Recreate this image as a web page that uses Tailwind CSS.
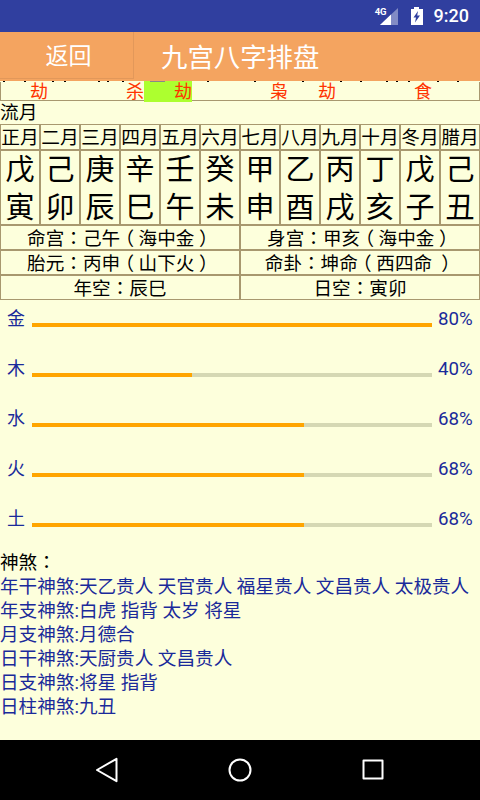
<!DOCTYPE html>
<html lang="zh">
<head>
  <meta charset="UTF-8">
  <title>九宫八字排盘</title>
  <meta name="viewport" content="width=device-width, initial-scale=1.0">
  <script src="https://cdn.jsdelivr.net/npm/@tailwindcss/browser@4"></script>
</head>
<body class="w-[480px] h-[800px] overflow-hidden bg-[#fdffdc] text-black font-['Roboto','Noto_Sans_CJK_SC',sans-serif]">
  <div class="flex flex-col h-[800px]">

    <!-- status bar -->
    <div class="h-8 bg-[#303f9f] flex items-center justify-end text-white shrink-0">
      <span class="text-[9.5px] font-bold leading-none mb-[9px] mr-[-7px]">4G</span>
      <svg width="20" height="18" viewBox="0 0 20 18" class="mt-[1px]">
        <path d="M0 17 L18 0 V17 Z" fill="#fff" fill-opacity="0.4"/>
        <path d="M0 17 L11 6.6 V17 Z" fill="#fff"/>
      </svg>
      <svg width="14" height="18" viewBox="0 0 14 18" class="ml-[10px]">
        <path d="M4 0 H9 V2 H13 V18 H1 V2 H4 Z M8 4 L3.500 10.500 H6 L5 15.500 L10 8.500 H7.200 Z" fill="#fff" fill-rule="evenodd"/>
      </svg>
      <span class="text-[18px] font-medium ml-[10px] mr-[11px] leading-none">9:20</span>
    </div>

    <!-- title bar -->
    <div class="h-[49px] bg-[#f4a460] flex shrink-0 text-white">
      <div class="w-[134px] h-[47px] flex items-center justify-center pl-1 pt-1 text-[23px] border-r border-b border-[#e2985a]">返回</div>
      <div class="pl-[27px] text-[26.4px] leading-[53px]">九宫八字排盘</div>
    </div>

    <!-- strokes of the row hidden behind the title bar -->
    <div class="relative h-[1px] shrink-0">
      <i class="absolute left-[3px] w-[2px] h-[1px] bg-black"></i>
      <i class="absolute left-[24px] w-[2px] h-[1px] bg-black"></i>
      <i class="absolute left-[52px] w-[2px] h-[1px] bg-black"></i>
      <i class="absolute left-[64px] w-[2px] h-[1px] bg-black"></i>
      <i class="absolute left-[98px] w-[2px] h-[1px] bg-black"></i>
      <i class="absolute left-[107px] w-[2px] h-[1px] bg-black"></i>
      <i class="absolute left-[122px] w-[2px] h-[1px] bg-black"></i>
      <i class="absolute left-[144px] w-[48px] h-[1px] bg-[#adff2f]"></i>
      <i class="absolute left-[150px] w-[15px] h-[1px] bg-[#888]"></i>
      <i class="absolute left-[207px] w-[2px] h-[1px] bg-black"></i>
      <i class="absolute left-[254px] w-[2px] h-[1px] bg-black"></i>
      <i class="absolute left-[302px] w-[2px] h-[1px] bg-black"></i>
      <i class="absolute left-[340px] w-[2px] h-[1px] bg-black"></i>
      <i class="absolute left-[360px] w-[2px] h-[1px] bg-black"></i>
      <i class="absolute left-[386px] w-[2px] h-[1px] bg-black"></i>
      <i class="absolute left-[396px] w-[2px] h-[1px] bg-black"></i>
      <i class="absolute left-[408px] w-[2px] h-[1px] bg-black"></i>
      <i class="absolute left-[437px] w-[2px] h-[1px] bg-black"></i>
      <i class="absolute left-[457px] w-[2px] h-[1px] bg-black"></i>
    </div>

    <!-- 神煞行 -->
    <div class="border-x border-b border-[#a8986f] h-[19px] shrink-0">
      <div class="grid grid-cols-[repeat(10,48px)] -ml-px h-[18px] text-[#ff3300] text-[18px] leading-[20px] text-right">
        <div>劫</div><div></div><div>杀</div><div class="bg-[#adff2f]">劫</div><div></div>
        <div>枭</div><div>劫</div><div></div><div>食</div><div></div>
      </div>
    </div>

    <div class="h-[23px] text-[18.7px] leading-[25px] shrink-0">流月</div>

    <!-- 流月 -->
    <div class="grid grid-cols-12 text-center shrink-0">
      <div><div class="h-[26px] text-[18.7px] leading-[26px] border border-[#a8986f]">正月</div><div class="h-[75px] text-[29px] leading-[38px] border border-[#a8986f]">戊<br>寅</div></div>
      <div><div class="h-[26px] text-[18.7px] leading-[26px] border border-[#a8986f]">二月</div><div class="h-[75px] text-[29px] leading-[38px] border border-[#a8986f]">己<br>卯</div></div>
      <div><div class="h-[26px] text-[18.7px] leading-[26px] border border-[#a8986f]">三月</div><div class="h-[75px] text-[29px] leading-[38px] border border-[#a8986f]">庚<br>辰</div></div>
      <div><div class="h-[26px] text-[18.7px] leading-[26px] border border-[#a8986f]">四月</div><div class="h-[75px] text-[29px] leading-[38px] border border-[#a8986f]">辛<br>巳</div></div>
      <div><div class="h-[26px] text-[18.7px] leading-[26px] border border-[#a8986f]">五月</div><div class="h-[75px] text-[29px] leading-[38px] border border-[#a8986f]">壬<br>午</div></div>
      <div><div class="h-[26px] text-[18.7px] leading-[26px] border border-[#a8986f]">六月</div><div class="h-[75px] text-[29px] leading-[38px] border border-[#a8986f]">癸<br>未</div></div>
      <div><div class="h-[26px] text-[18.7px] leading-[26px] border border-[#a8986f]">七月</div><div class="h-[75px] text-[29px] leading-[38px] border border-[#a8986f]">甲<br>申</div></div>
      <div><div class="h-[26px] text-[18.7px] leading-[26px] border border-[#a8986f]">八月</div><div class="h-[75px] text-[29px] leading-[38px] border border-[#a8986f]">乙<br>酉</div></div>
      <div><div class="h-[26px] text-[18.7px] leading-[26px] border border-[#a8986f]">九月</div><div class="h-[75px] text-[29px] leading-[38px] border border-[#a8986f]">丙<br>戌</div></div>
      <div><div class="h-[26px] text-[18.7px] leading-[26px] border border-[#a8986f]">十月</div><div class="h-[75px] text-[29px] leading-[38px] border border-[#a8986f]">丁<br>亥</div></div>
      <div><div class="h-[26px] text-[18.7px] leading-[26px] border border-[#a8986f]">冬月</div><div class="h-[75px] text-[29px] leading-[38px] border border-[#a8986f]">戊<br>子</div></div>
      <div><div class="h-[26px] text-[18.7px] leading-[26px] border border-[#a8986f]">腊月</div><div class="h-[75px] text-[29px] leading-[38px] border border-[#a8986f]">己<br>丑</div></div>
    </div>

    <!-- 命宫 etc -->
    <div class="grid grid-cols-2 text-center text-[18.6px] leading-[22px] shrink-0">
      <div class="h-[25px] border border-[#a8986f]">命宫<span lang="zh-TW" class="font-['Noto_Sans_CJK_TC']">：</span>己午<span class="[font-feature-settings:'halt'] px-[4.6px]">（</span>海中金<span class="[font-feature-settings:'halt'] px-[4.6px]">）</span></div>
      <div class="h-[25px] border border-[#a8986f]">身宫<span lang="zh-TW" class="font-['Noto_Sans_CJK_TC']">：</span>甲亥<span class="[font-feature-settings:'halt'] px-[4.6px]">（</span>海中金<span class="[font-feature-settings:'halt'] px-[4.6px]">）</span></div>
      <div class="h-[25px] border border-[#a8986f]">胎元<span lang="zh-TW" class="font-['Noto_Sans_CJK_TC']">：</span>丙申<span class="[font-feature-settings:'halt'] px-[4.6px]">（</span>山下火<span class="[font-feature-settings:'halt'] px-[4.6px]">）</span></div>
      <div class="h-[25px] border border-[#a8986f]">命卦<span lang="zh-TW" class="font-['Noto_Sans_CJK_TC']">：</span>坤命<span class="[font-feature-settings:'halt'] px-[4.6px]">（</span>西四命 <span class="[font-feature-settings:'halt'] px-[4.6px]">）</span></div>
      <div class="h-[25px] border border-[#a8986f]">年空<span lang="zh-TW" class="font-['Noto_Sans_CJK_TC']">：</span>辰巳</div>
      <div class="h-[25px] border border-[#a8986f]">日空<span lang="zh-TW" class="font-['Noto_Sans_CJK_TC']">：</span>寅卯</div>
    </div>

    <!-- 五行 -->
    <div class="flex flex-col text-[#1a2a9a] mt-[6px] shrink-0">
      <div class="h-[50px] flex items-start">
        <span class="w-8 pl-[7px] text-[18px] leading-[26px]">金</span>
        <div class="w-[400px] h-1 mt-[17px] bg-[#d5d8b4]"><div class="h-1 bg-[#ffa500]" style="width:100%"></div></div>
        <span class="ml-[6px] text-[18.7px] leading-[26px]">80%</span>
      </div>
      <div class="h-[50px] flex items-start">
        <span class="w-8 pl-[7px] text-[18px] leading-[26px]">木</span>
        <div class="w-[400px] h-1 mt-[17px] bg-[#d5d8b4]"><div class="h-1 bg-[#ffa500]" style="width:40%"></div></div>
        <span class="ml-[6px] text-[18.7px] leading-[26px]">40%</span>
      </div>
      <div class="h-[50px] flex items-start">
        <span class="w-8 pl-[7px] text-[18px] leading-[26px]">水</span>
        <div class="w-[400px] h-1 mt-[17px] bg-[#d5d8b4]"><div class="h-1 bg-[#ffa500]" style="width:68%"></div></div>
        <span class="ml-[6px] text-[18.7px] leading-[26px]">68%</span>
      </div>
      <div class="h-[50px] flex items-start">
        <span class="w-8 pl-[7px] text-[18px] leading-[26px]">火</span>
        <div class="w-[400px] h-1 mt-[17px] bg-[#d5d8b4]"><div class="h-1 bg-[#ffa500]" style="width:68%"></div></div>
        <span class="ml-[6px] text-[18.7px] leading-[26px]">68%</span>
      </div>
      <div class="h-[42px] flex items-start">
        <span class="w-8 pl-[7px] text-[18px] leading-[26px]">土</span>
        <div class="w-[400px] h-1 mt-[17px] bg-[#d5d8b4]"><div class="h-1 bg-[#ffa500]" style="width:68%"></div></div>
        <span class="ml-[6px] text-[18.7px] leading-[26px]">68%</span>
      </div>
    </div>

    <!-- 神煞 -->
    <div class="mt-[1px] text-[18.6px] leading-6 shrink-0">
      <div>神煞<span lang="zh-TW" class="font-['Noto_Sans_CJK_TC']">：</span></div>
      <div class="text-[#1a2a9a]">
        <div>年干神煞:天乙贵人 天官贵人 福星贵人 文昌贵人 太极贵人</div>
        <div>年支神煞:白虎 指背 太岁 将星</div>
        <div>月支神煞:月德合</div>
        <div>日干神煞:天厨贵人 文昌贵人</div>
        <div>日支神煞:将星 指背</div>
        <div>日柱神煞:九丑</div>
      </div>
    </div>

    <!-- nav bar -->
    <div class="mt-auto h-[60px] bg-black flex items-center pl-[95px] gap-[109px] shrink-0">
      <svg width="24" height="26" viewBox="0 0 24 26" fill="none" stroke="#fff" stroke-width="2" stroke-linejoin="round"><path d="M2 13 L21.500 1.800 V24.200 Z"/></svg>
      <svg width="24" height="24" viewBox="0 0 24 24" fill="none" stroke="#fff" stroke-width="2"><circle cx="12" cy="12" r="10.500"/></svg>
      <svg width="22" height="22" viewBox="0 0 22 22" fill="none" stroke="#fff" stroke-width="2" stroke-linejoin="round" class="ml-px"><rect x="1.500" y="1.500" width="19" height="18"/></svg>
    </div>
  </div>
</body>
</html>
